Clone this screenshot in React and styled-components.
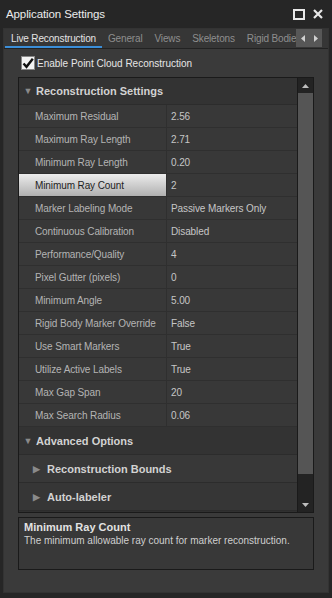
import React from "react";
import styled, { createGlobalStyle } from "styled-components";

const Global = createGlobalStyle`
  html, body {
    margin: 0;
    padding: 0;
    background: #262626;
  }
  body {
    font-family: "Liberation Sans", Arial, sans-serif;
    font-size: 10px;
  }
`;

const settings = [
  ["Maximum Residual", "2.56"],
  ["Maximum Ray Length", "2.71"],
  ["Minimum Ray Length", "0.20"],
  ["Minimum Ray Count", "2"],
  ["Marker Labeling Mode", "Passive Markers Only"],
  ["Continuous Calibration", "Disabled"],
  ["Performance/Quality", "4"],
  ["Pixel Gutter (pixels)", "0"],
  ["Minimum Angle", "5.00"],
  ["Rigid Body Marker Override", "False"],
  ["Use Smart Markers", "True"],
  ["Utilize Active Labels", "True"],
  ["Max Gap Span", "20"],
  ["Max Search Radius", "0.06"],
];

const tabs = ["Live Reconstruction", "General", "Views", "Skeletons", "Rigid Bodies"];

function App() {
  return (
    <>
      <Global />
      <Window>
        <TitleBar>
          <Title>Application Settings</Title>
          <TitleButtons>
            <svg width="12" height="11" viewBox="0 0 12 11">
              <rect x="1" y="1" width="10" height="9" fill="none" stroke="#e8e8e8" strokeWidth="2" />
            </svg>
            <svg width="10" height="10" viewBox="0 0 10 10">
              <path d="M1 1 L9 9 M9 1 L1 9" stroke="#e8e8e8" strokeWidth="2.2" />
            </svg>
          </TitleButtons>
        </TitleBar>
        <TabPanel>
          <TabStrip>
            <Tabs>
              {tabs.map((t, i) => (
                <Tab key={t} $active={i === 0}>
                  {t}
                </Tab>
              ))}
            </Tabs>
            <TabArrows>
              <svg width="6" height="7" viewBox="0 0 6 7">
                <path d="M5 0 L1 3.5 L5 7 Z" fill="#d0d0d0" />
              </svg>
              <svg width="6" height="7" viewBox="0 0 6 7">
                <path d="M1 0 L5 3.5 L1 7 Z" fill="#d0d0d0" />
              </svg>
            </TabArrows>
          </TabStrip>
          <Page>
            <CheckRow>
              <CheckBox>
                <svg width="12" height="12" viewBox="0 0 12 12">
                  <path d="M1.5 6.5 L4.5 9.8 L10.8 1.8" fill="none" stroke="#111" strokeWidth="2.4" />
                </svg>
              </CheckBox>
              Enable Point Cloud Reconstruction
            </CheckRow>
            <Grid>
              <GridBody>
                <Category>
                  <Caret>▼</Caret>Reconstruction Settings
                </Category>
                {settings.map(([label, value]) => (
                  <Row key={label}>
                    <Label $selected={label === "Minimum Ray Count"}>{label}</Label>
                    <Value>{value}</Value>
                  </Row>
                ))}
                <Category $tall>
                  <Caret>▼</Caret>Advanced Options
                </Category>
                <SubCategory $light>
                  <SubCaret>▶</SubCaret>Reconstruction Bounds
                </SubCategory>
                <SubCategory>
                  <SubCaret>▶</SubCaret>Auto-labeler
                </SubCategory>
              </GridBody>
              <ScrollBar>
                <ScrollArrow>
                  <svg width="7" height="4" viewBox="0 0 7 4">
                    <path d="M0 4 L3.5 0 L7 4 Z" fill="#bdbdbd" />
                  </svg>
                </ScrollArrow>
                <Thumb />
                <Track />
                <ScrollArrow>
                  <svg width="7" height="4" viewBox="0 0 7 4">
                    <path d="M0 0 L3.5 4 L7 0 Z" fill="#bdbdbd" />
                  </svg>
                </ScrollArrow>
              </ScrollBar>
            </Grid>
            <Description>
              <DescTitle>Minimum Ray Count</DescTitle>
              <DescText>The minimum allowable ray count for marker reconstruction.</DescText>
            </Description>
          </Page>
        </TabPanel>
      </Window>
    </>
  );
}

export default App;

const Window = styled.div`
  width: 332px;
  height: 598px;
  display: flex;
  flex-direction: column;
  background: #262626;
  box-sizing: border-box;
  padding: 0 3px 5px 3px;
`;

const TitleBar = styled.div`
  height: 28px;
  flex: none;
  display: flex;
  align-items: center;
  justify-content: space-between;
  padding: 0 5px 0 3px;
`;

const Title = styled.div`
  color: #ececec;
  font-size: 11.5px;
  letter-spacing: -0.1px;
`;

const TitleButtons = styled.div`
  display: flex;
  align-items: center;
  gap: 8px;
  margin-right: 1px;
`;

const TabPanel = styled.div`
  flex: 1;
  display: flex;
  flex-direction: column;
  background: #3a3a3a;
  border: 1px solid #333;
`;

const TabStrip = styled.div`
  height: 19px;
  display: flex;
  align-items: stretch;
  border-bottom: 1px solid #222;
  padding-left: 1px;
  background: #363636;
`;

const Tabs = styled.div`
  flex: 1;
  display: flex;
  overflow: hidden;
  white-space: nowrap;
`;

const Tab = styled.div`
  padding: 4px 6px 0 6px;
  color: ${(p) => (p.$active ? "#e4e4e4" : "#8e8e8e")};
  border-bottom: 2px solid ${(p) => (p.$active ? "#3b8ed8" : "transparent")};
  font-size: 10px;
  letter-spacing: -0.15px;
`;

const TabArrows = styled.div`
  width: 26px;
  flex: none;
  background: #575757;
  display: flex;
  align-items: center;
  justify-content: space-around;
  margin: 0 6px 1px 0;
`;

const Page = styled.div`
  flex: 1;
  display: flex;
  flex-direction: column;
  padding: 7px 14px 0 14px;
`;

const CheckRow = styled.label`
  display: flex;
  align-items: center;
  gap: 2px;
  color: #e6e6e6;
  font-size: 10px;
  height: 14px;
  padding-left: 3px;
  margin-bottom: 7px;
`;

const CheckBox = styled.span`
  width: 12px;
  height: 12px;
  background: #f4f4f4;
  border: 1px solid #888;
  display: flex;
  align-items: center;
  justify-content: center;
`;

const Grid = styled.div`
  height: 434px;
  display: flex;
  border: 1px solid #1a1a1a;
  background: #303030;
  overflow: hidden;
`;

const GridBody = styled.div`
  flex: 1;
  display: flex;
  flex-direction: column;
`;

const Category = styled.div`
  height: ${(p) => (p.$tall ? "28px" : "27px")};
  flex: none;
  display: flex;
  align-items: center;
  background: #333333;
  border-bottom: 1px solid #2c2c2c;
  box-sizing: border-box;
  color: #d2d2d2;
  font-weight: bold;
  font-size: 11px;
`;

const Caret = styled.span`
  width: 16px;
  text-align: center;
  color: #8a8a8a;
  font-size: 9px;
  margin-left: 1px;
`;

const SubCategory = styled.div`
  height: 28px;
  flex: none;
  display: flex;
  align-items: center;
  background: ${(p) => (p.$light ? "#383838" : "#363636")};
  border-bottom: 1px solid #2c2c2c;
  box-sizing: border-box;
  color: #d2d2d2;
  font-weight: bold;
  font-size: 11px;
  padding-left: 14px;
`;

const SubCaret = styled.span`
  width: 14px;
  color: #8a8a8a;
  font-size: 9px;
`;

const Row = styled.div`
  height: 23px;
  flex: none;
  display: grid;
  grid-template-columns: 148px 1fr;
  border-bottom: 1px solid #2f2f2f;
  box-sizing: border-box;
  background: #383838;
  font-size: 10px;
  letter-spacing: -0.1px;
`;

const Label = styled.div`
  display: flex;
  align-items: center;
  padding-left: 16px;
  border-right: 1px solid #2f2f2f;
  color: ${(p) => (p.$selected ? "#1e1e1e" : "#b4b4b4")};
  background: ${(p) =>
    p.$selected ? "linear-gradient(#ececec, #c8c8c8 60%, #b0b0b0)" : "transparent"};
  white-space: nowrap;
  overflow: hidden;
`;

const Value = styled.div`
  display: flex;
  align-items: center;
  padding-left: 4px;
  color: #c6c6c6;
  white-space: nowrap;
`;

const ScrollBar = styled.div`
  width: 15px;
  flex: none;
  display: flex;
  flex-direction: column;
  background: #232323;
  border-left: 1px solid #1a1a1a;
`;

const ScrollArrow = styled.div`
  height: 15px;
  display: flex;
  align-items: center;
  justify-content: center;
`;

const Thumb = styled.div`
  height: 381px;
  background: #555555;
`;

const Track = styled.div`
  flex: 1;
`;

const Description = styled.div`
  margin-top: 4px;
  height: 53px;
  border: 1px solid #1a1a1a;
  background: #383838;
  padding: 3px 5px;
  box-sizing: border-box;
`;

const DescTitle = styled.div`
  color: #e2e2e2;
  font-weight: bold;
  font-size: 11px;
  margin-bottom: 2px;
`;

const DescText = styled.div`
  color: #cfcfcf;
  font-size: 10px;
`;
